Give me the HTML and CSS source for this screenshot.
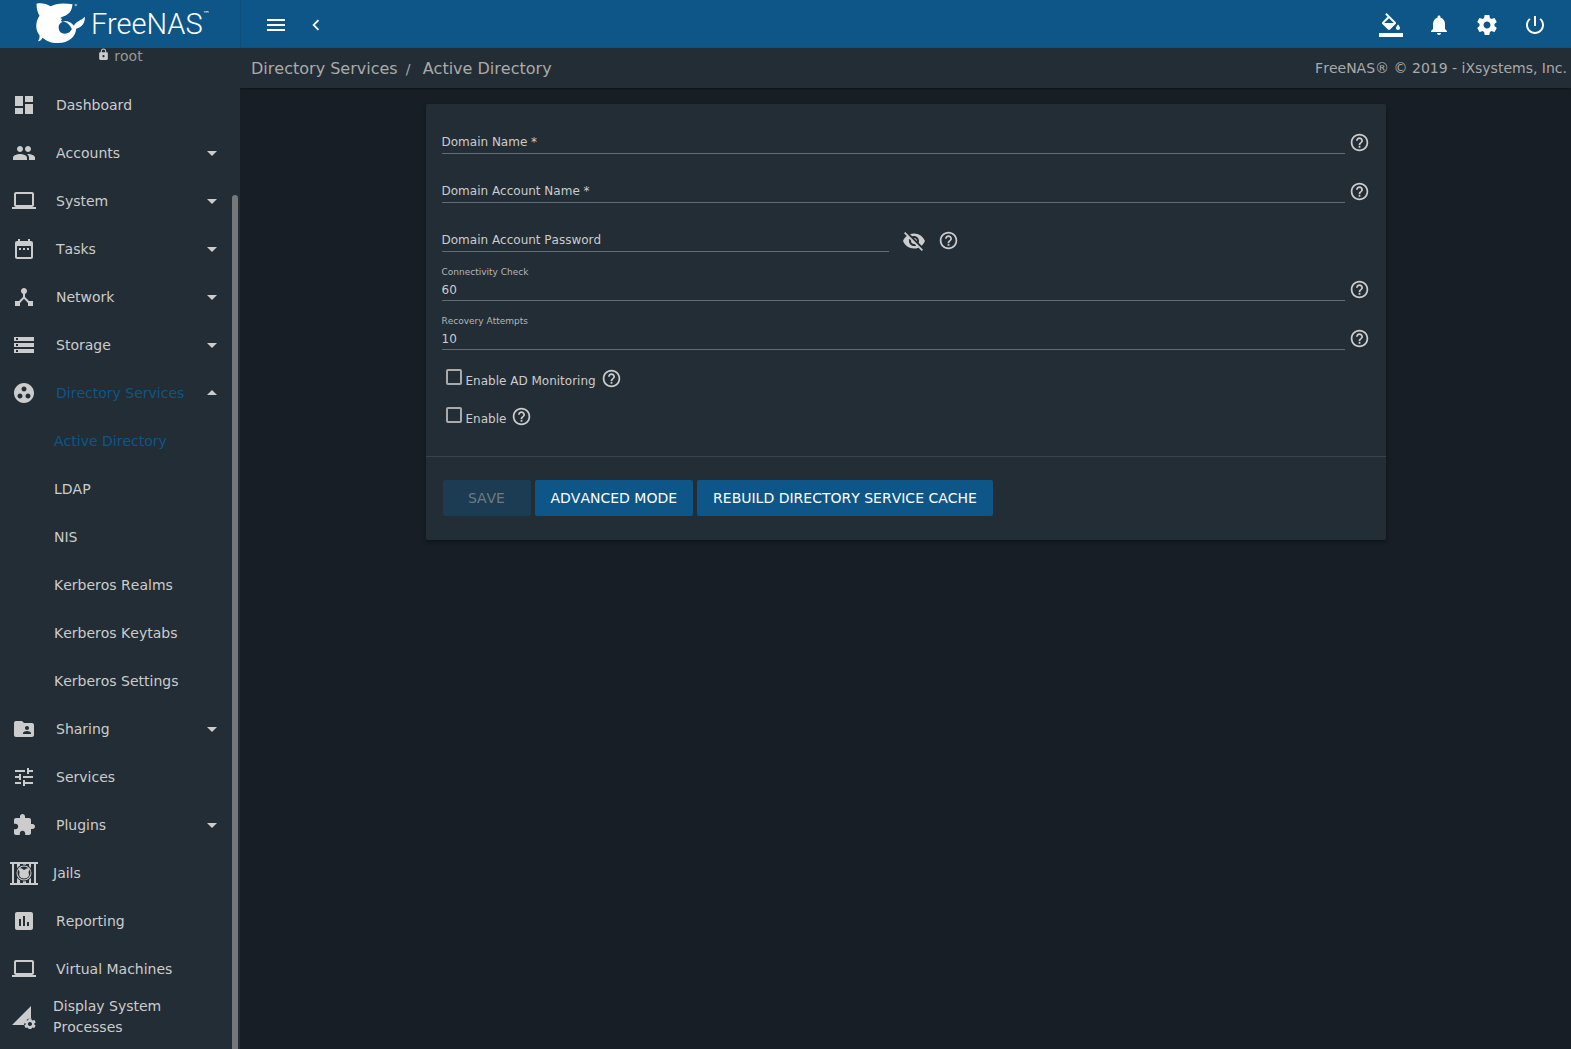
FILE: index.html
```html
<!DOCTYPE html>
<html lang="en">
<head>
<meta charset="utf-8">
<meta name="viewport" content="width=device-width, initial-scale=1">
<title>FreeNAS - Active Directory</title>
<link rel="stylesheet" href="styles.css">
</head>
<body>
<svg class="sprite" aria-hidden="true">
  <symbol id="laptop" viewBox="0 0 24 24"><path d="M20 18c1.100 0 1.990-.9 1.990-2L22 5c0-1.100-.9-2-2-2H4c-1.100 0-2 .9-2 2v11c0 1.100.9 2 2 2H0v2h24v-2h-4zM4 5h16v11H4V5z"/></symbol>
  <symbol id="down" viewBox="0 0 24 24"><path d="M7 10l5 5 5-5z"/></symbol>
  <symbol id="up" viewBox="0 0 24 24"><path d="M7 14l5-5 5 5z"/></symbol>
  <symbol id="help" viewBox="0 0 24 24"><path d="M11 18h2v-2h-2v2zm1-16C6.480 2 2 6.480 2 12s4.480 10 10 10 10-4.480 10-10S17.520 2 12 2zm0 18c-4.410 0-8-3.590-8-8s3.590-8 8-8 8 3.590 8 8-3.590 8-8 8zm0-14c-2.210 0-4 1.790-4 4h2c0-1.100.9-2 2-2s2 .9 2 2c0 2-3 1.750-3 5h2c0-2.250 3-2.500 3-5 0-2.210-1.790-4-4-4z"/></symbol>
</svg>

<header class="topbar">
  <a class="brand" href="#" aria-label="FreeNAS">
    <svg class="shark" viewBox="106 6 152 126" aria-hidden="true"><path d="M110 11C126 8 140 12 152 19C168 10 190 8 218 13C217 27 212 38 203 43C196 49 188 50 181 54L187 57L183 62L188 66C178 69 173 80 179 93C185 103 199 103 209 97L216 88C212 76 202 66 188 64C204 60 216 68 222 77C230 62 244 62 255 50C256 66 249 80 229 86C228 110 206 130 172 129C153 129 138 122 128 113C126 119 121 123 114 124C118 119 120 112 119 106C107 91 105 67 119 47C113 37 110 25 110 11Z"/><circle class="reg" cx="228" cy="15" r="4"/></svg>
    <span class="wordmark">FreeNAS</span><sup class="tm">™</sup>
  </a>
  <div class="tools">
    <button class="tool" type="button" aria-label="Toggle menu"><svg viewBox="0 0 24 24"><path d="M3 18h18v-2H3v2zm0-5h18v-2H3v2zm0-7v2h18V6H3z"/></svg></button>
    <button class="tool small" type="button" aria-label="Collapse menu"><svg viewBox="0 0 24 24"><path d="M15.410 7.410L14 6l-6 6 6 6 1.410-1.410L10.830 12z"/></svg></button>
  </div>
  <div class="actions">
    <button class="action" type="button" aria-label="Theme"><svg viewBox="0 0 24 24"><path d="M16.560 8.940L7.620 0 6.210 1.410l2.380 2.380-5.150 5.150c-.59.59-.59 1.540 0 2.120l5.500 5.500c.29.29.68.44 1.060.44s.77-.15 1.060-.44l5.500-5.500c.59-.58.59-1.530 0-2.120zM5.210 10L10 5.210 14.790 10H5.210zM19 11.500s-2 2.170-2 3.500c0 1.100.9 2 2 2s2-.9 2-2c0-1.330-2-3.500-2-3.500zM0 20h24v4H0z"/></svg></button>
    <button class="action" type="button" aria-label="Notifications"><svg viewBox="0 0 24 24"><path d="M12 22c1.100 0 2-.9 2-2h-4c0 1.100.89 2 2 2zm6-6v-5c0-3.070-1.640-5.640-4.500-6.320V4c0-.83-.67-1.500-1.500-1.500s-1.500.67-1.500 1.500v.68C7.630 5.360 6 7.920 6 11v5l-2 2v1h16v-1l-2-2z"/></svg></button>
    <button class="action" type="button" aria-label="Settings"><svg viewBox="0 0 24 24"><path id="gear" d="M19.430 12.980c.04-.32.070-.64.070-.98s-.03-.66-.07-.98l2.110-1.650c.19-.15.24-.42.120-.64l-2-3.460c-.12-.22-.39-.3-.61-.22l-2.490 1c-.52-.4-1.080-.73-1.690-.98l-.38-2.650C14.460 2.180 14.250 2 14 2h-4c-.25 0-.46.18-.49.42l-.38 2.650c-.61.25-1.170.59-1.690.98l-2.490-1c-.23-.09-.49 0-.61.22l-2 3.460c-.13.22-.07.49.120.64l2.110 1.650c-.04.320-.07.650-.07.980s.03.660.07.980l-2.110 1.650c-.19.150-.24.420-.12.640l2 3.460c.12.220.39.300.61.220l2.490-1c.52.400 1.080.730 1.690.980l.38 2.650c.03.240.24.420.49.420h4c.25 0 .46-.18.490-.42l.38-2.650c.61-.25 1.170-.59 1.690-.98l2.490 1c.23.090.49 0 .61-.22l2-3.460c.12-.22.070-.49-.12-.64l-2.110-1.650zM12 15.500c-1.930 0-3.500-1.570-3.500-3.500s1.570-3.500 3.500-3.500 3.500 1.570 3.500 3.500-1.570 3.500-3.500 3.500z"/></svg></button>
    <button class="action" type="button" aria-label="Power"><svg viewBox="0 0 24 24"><path d="M13 3h-2v10h2V3zm4.830 2.170l-1.420 1.420C17.990 7.860 19 9.810 19 12c0 3.870-3.130 7-7 7s-7-3.130-7-7c0-2.190 1.010-4.140 2.580-5.420L6.170 5.170C4.230 6.820 3 9.260 3 12c0 4.970 4.030 9 9 9s9-4.030 9-9c0-2.740-1.230-5.180-3.170-6.830z"/></svg></button>
  </div>
</header>

<div class="shell">
  <aside class="sidebar">
    <div class="user">
      <svg viewBox="0 0 24 24" aria-hidden="true"><path d="M18 8h-1V6c0-2.760-2.240-5-5-5S7 3.240 7 6v2H6c-1.100 0-2 .9-2 2v10c0 1.100.9 2 2 2h12c1.100 0 2-.9 2-2V10c0-1.100-.9-2-2-2zm-6 9c-1.100 0-2-.9-2-2s.9-2 2-2 2 .9 2 2-.9 2-2 2zm3.100-9H8.900V6c0-1.710 1.390-3.100 3.100-3.100 1.710 0 3.100 1.390 3.100 3.100v2z"/></svg>
      <span>root</span>
    </div>
    <nav class="menu">
      <a class="item" href="#"><svg viewBox="0 0 24 24"><path d="M3 13h8V3H3v10zm0 8h8v-6H3v6zm10 0h8V11h-8v10zm0-18v6h8V3h-8z"/></svg><span>Dashboard</span></a>
      <a class="item" href="#"><svg viewBox="0 0 24 24"><path d="M16 11c1.660 0 2.990-1.340 2.990-3S17.660 5 16 5c-1.660 0-3 1.340-3 3s1.340 3 3 3zm-8 0c1.660 0 2.990-1.340 2.990-3S9.660 5 8 5C6.340 5 5 6.340 5 8s1.340 3 3 3zm0 2c-2.330 0-7 1.170-7 3.500V19h14v-2.500c0-2.330-4.670-3.500-7-3.500zm8 0c-.29 0-.62.020-.97.050 1.160.84 1.970 1.970 1.970 3.450V19h6v-2.500c0-2.330-4.670-3.500-7-3.500z"/></svg><span>Accounts</span><svg class="caret"><use href="#down"/></svg></a>
      <a class="item" href="#"><svg><use href="#laptop"/></svg><span>System</span><svg class="caret"><use href="#down"/></svg></a>
      <a class="item" href="#"><svg viewBox="0 0 24 24"><path d="M9 11H7v2h2v-2zm4 0h-2v2h2v-2zm4 0h-2v2h2v-2zm2-7h-1V2h-2v2H8V2H6v2H5c-1.110 0-1.990.9-1.990 2L3 20c0 1.100.89 2 2 2h14c1.100 0 2-.9 2-2V6c0-1.100-.9-2-2-2zm0 16H5V9h14v11z"/></svg><span>Tasks</span><svg class="caret"><use href="#down"/></svg></a>
      <a class="item" href="#"><svg viewBox="0 0 24 24"><path d="M17 16l-4-4V8.820C14.160 8.400 15 7.300 15 6c0-1.660-1.340-3-3-3S9 4.340 9 6c0 1.300.84 2.400 2 2.820V12l-4 4H3v5h5v-3.050l4-4.200 4 4.200V21h5v-5h-4z"/></svg><span>Network</span><svg class="caret"><use href="#down"/></svg></a>
      <a class="item" href="#"><svg viewBox="0 0 24 24"><path d="M2 20h20v-4H2v4zm2-3h2v2H4v-2zM2 4v4h20V4H2zm4 3H4V5h2v2zm-4 7h20v-4H2v4zm2-3h2v2H4v-2z"/></svg><span>Storage</span><svg class="caret"><use href="#down"/></svg></a>
      <a class="item active" href="#"><svg viewBox="0 0 24 24"><path d="M12 2C6.480 2 2 6.480 2 12s4.480 10 10 10 10-4.480 10-10S17.520 2 12 2zM8 17.500c-1.380 0-2.500-1.120-2.500-2.500s1.120-2.500 2.500-2.500 2.500 1.120 2.500 2.500-1.120 2.500-2.500 2.500zM9.500 8c0-1.380 1.120-2.500 2.500-2.500s2.500 1.120 2.500 2.500-1.120 2.500-2.500 2.500S9.500 9.380 9.500 8zm6.500 9.500c-1.380 0-2.500-1.120-2.500-2.500s1.120-2.500 2.500-2.500 2.500 1.120 2.500 2.500-1.120 2.500-2.500 2.500z"/></svg><span>Directory Services</span><svg class="caret"><use href="#up"/></svg></a>
      <a class="item sub active" href="#"><span>Active Directory</span></a>
      <a class="item sub" href="#"><span>LDAP</span></a>
      <a class="item sub" href="#"><span>NIS</span></a>
      <a class="item sub" href="#"><span>Kerberos Realms</span></a>
      <a class="item sub" href="#"><span>Kerberos Keytabs</span></a>
      <a class="item sub" href="#"><span>Kerberos Settings</span></a>
      <a class="item" href="#"><svg viewBox="0 0 24 24"><path d="M20 6h-8l-2-2H4c-1.100 0-1.990.9-1.990 2L2 18c0 1.100.9 2 2 2h16c1.100 0 2-.9 2-2V8c0-1.100-.9-2-2-2zm-5 3c1.100 0 2 .9 2 2s-.9 2-2 2-2-.9-2-2 .9-2 2-2zm4 8h-8v-1c0-1.330 2.670-2 4-2s4 .67 4 2v1z"/></svg><span>Sharing</span><svg class="caret"><use href="#down"/></svg></a>
      <a class="item" href="#"><svg viewBox="0 0 24 24"><path d="M3 17v2h6v-2H3zM3 5v2h10V5H3zm10 16v-2h8v-2h-8v-2h-2v6h2zM7 9v2H3v2h4v2h2V9H7zm14 4v-2H11v2h10zm-6-4h2V7h4V5h-4V3h-2v6z"/></svg><span>Services</span></a>
      <a class="item" href="#"><svg viewBox="0 0 24 24"><path d="M20.500 11H19V7c0-1.100-.9-2-2-2h-4V3.500C13 2.120 11.880 1 10.500 1S8 2.120 8 3.500V5H4c-1.100 0-1.990.9-1.990 2v3.800H3.500c1.490 0 2.700 1.210 2.700 2.700s-1.210 2.700-2.700 2.700H2V20c0 1.100.9 2 2 2h3.800v-1.500c0-1.490 1.210-2.700 2.700-2.700 1.490 0 2.700 1.210 2.700 2.700V22H17c1.100 0 2-.9 2-2v-4h1.500c1.380 0 2.500-1.120 2.500-2.500S21.880 11 20.500 11z"/></svg><span>Plugins</span><svg class="caret"><use href="#down"/></svg></a>
      <a class="item custom" href="#"><svg viewBox="0 0 28 24"><path d="M0 1h28v2H0zM0 22h28v2H0zM2 3h2v19H2zM7 3h3v19H7zM13 3h3v19h-3zM19 3h2v19h-2zM24 3h2v19h-2z"/><circle class="hole" cx="14" cy="12" r="8.500"/><circle cx="14" cy="12" r="7.500"/><circle class="hole" cx="14" cy="12" r="6.500"/><path d="M9 7q3 0 5 2q3-2 5-2q1 2-.5 4q2 6-4.500 6.500q-6-.5-4.500-6.500Q8.500 9 9 7z"/></svg><span>Jails</span></a>
      <a class="item" href="#"><svg viewBox="0 0 24 24"><path d="M19 3H5c-1.100 0-2 .9-2 2v14c0 1.100.9 2 2 2h14c1.100 0 2-.9 2-2V5c0-1.100-.9-2-2-2zM9 17H7v-7h2v7zm4 0h-2V7h2v10zm4 0h-2v-4h2v4z"/></svg><span>Reporting</span></a>
      <a class="item" href="#"><svg><use href="#laptop"/></svg><span>Virtual Machines</span></a>
      <a class="item custom" href="#"><svg viewBox="0 0 28 24"><path d="M2 20L21 1V13Q15 14 14 20Z"/><g transform="translate(13 12) scale(.58)"><use href="#gear"/></g></svg><span class="wrap">Display System Processes</span></a>
    </nav>
    <div class="scroll-thumb"></div>
  </aside>

  <main class="content">
    <div class="crumbs">
      <nav class="trail" aria-label="Breadcrumb"><a href="#">Directory Services</a><span class="slash">/</span><a href="#">Active Directory</a></nav>
      <span class="copyright">FreeNAS® © 2019 - iXsystems, Inc.</span>
    </div>
    <form class="card">
      <div class="fields">
        <div class="row">
          <div class="field"><label for="domain">Domain Name *</label><input id="domain" type="text"></div>
          <button class="icon-btn" type="button" aria-label="Help"><svg><use href="#help"/></svg></button>
        </div>
        <div class="row">
          <div class="field"><label for="account">Domain Account Name *</label><input id="account" type="text"></div>
          <button class="icon-btn" type="button" aria-label="Help"><svg><use href="#help"/></svg></button>
        </div>
        <div class="row half">
          <div class="field"><label for="password">Domain Account Password</label><input id="password" type="password"></div>
          <button class="icon-btn eye" type="button" aria-label="Show password"><svg viewBox="0 0 24 24"><path d="M12 7c2.760 0 5 2.240 5 5 0 .65-.13 1.260-.36 1.830l2.920 2.920c1.510-1.260 2.700-2.890 3.430-4.750-1.730-4.390-6-7.500-11-7.500-1.400 0-2.740.25-3.980.7l2.160 2.160C10.740 7.130 11.350 7 12 7zM2 4.270l2.280 2.280.46.46C3.080 8.300 1.780 10.020 1 12c1.730 4.390 6 7.500 11 7.500 1.550 0 3.030-.3 4.380-.84l.42.42L19.730 22 21 20.730 3.270 3 2 4.270zM7.530 9.800l1.550 1.550c-.05.21-.08.43-.08.650 0 1.660 1.340 3 3 3 .22 0 .44-.03.65-.08l1.550 1.550c-.67.33-1.410.53-2.200.53-2.760 0-5-2.240-5-5 0-.79.2-1.530.53-2.200zm4.310-.78l3.150 3.150.02-.16c0-1.660-1.340-3-3-3l-.17.010z"/></svg></button>
          <button class="icon-btn" type="button" aria-label="Help"><svg><use href="#help"/></svg></button>
        </div>
        <div class="row">
          <div class="field filled"><label for="check">Connectivity Check</label><input id="check" type="text" value="60"></div>
          <button class="icon-btn" type="button" aria-label="Help"><svg><use href="#help"/></svg></button>
        </div>
        <div class="row">
          <div class="field filled"><label for="attempts">Recovery Attempts</label><input id="attempts" type="text" value="10"></div>
          <button class="icon-btn" type="button" aria-label="Help"><svg><use href="#help"/></svg></button>
        </div>
        <div class="tick">
          <input id="monitor" type="checkbox"><label for="monitor">Enable AD Monitoring</label>
          <button class="icon-btn" type="button" aria-label="Help"><svg><use href="#help"/></svg></button>
        </div>
        <div class="tick">
          <input id="enable" type="checkbox"><label for="enable">Enable</label>
          <button class="icon-btn" type="button" aria-label="Help"><svg><use href="#help"/></svg></button>
        </div>
      </div>
      <div class="buttons">
        <button class="btn" type="submit" disabled>SAVE</button>
        <button class="btn" type="button">ADVANCED MODE</button>
        <button class="btn" type="button">REBUILD DIRECTORY SERVICE CACHE</button>
      </div>
    </form>
  </main>
</div>
</body>
</html>
```
FILE: styles.css
```css
:root {
  --bg: #171e26;
  --panel: #232d35;
  --primary: #0d5687;
  --fg: #cccccc;
  --fg-dim: #aaaaaa;
}

* { box-sizing: border-box; }

body {
  margin: 0;
  height: 100vh;
  display: flex;
  flex-direction: column;
  overflow: hidden;
  background: var(--bg);
  color: var(--fg);
  font-family: "DejaVu Sans", sans-serif;
  font-size: 14px;
  font-kerning: none;
}

a { color: inherit; text-decoration: none; }
svg { display: block; fill: currentColor; }
.sprite { display: none; }
button { font: inherit; font-kerning: none; color: inherit; background: none; border: 0; padding: 0; cursor: pointer; }

/* top bar */
.topbar {
  flex: none;
  display: flex;
  height: 48px;
  background: var(--primary);
  color: #fff;
}
.brand {
  width: 241px;
  padding-left: 35px;
  display: flex;
  align-items: center;
  border-right: 1px solid #0b4e7b;
}
.shark { width: 51px; height: 42px; margin: 0 5px 2px 0; }
.reg { opacity: .5; }
.wordmark { font: 300 29px/46px Roboto, sans-serif; }
.tm { align-self: flex-start; font-size: 7px; line-height: 28px; }
.tools { flex: 1; display: flex; align-items: center; padding: 2px 0 0 15px; }
.tool { width: 40px; height: 40px; display: grid; place-items: center; }
.tool svg, .action svg { width: 24px; height: 24px; }
.tool.small svg { width: 22px; height: 22px; }
.actions { display: flex; align-items: center; padding: 2px 12px 0 0; }
.action { width: 48px; height: 46px; display: grid; place-items: center; }

/* sidebar */
.shell { flex: 1; min-height: 0; display: flex; }
.sidebar {
  position: relative;
  flex: none;
  width: 240px;
  overflow: hidden;
  background: var(--panel);
}
.user {
  display: flex;
  justify-content: center;
  gap: 4px;
  height: 33px;
  color: #999999;
  line-height: 16px;
}
.user svg { width: 13px; height: 13px; color: var(--fg); }
.item {
  display: flex;
  align-items: center;
  gap: 20px;
  height: 48px;
  padding: 0 16px 0 12px;
  line-height: 21px;
  white-space: nowrap;
}
.item svg { flex: none; width: 24px; height: 24px; color: var(--fg); }
.item .caret { margin-left: auto; }
.item span + .caret { margin-left: auto; }
.item:has(.caret) { gap: 0; }
.item:has(.caret) span { padding-left: 20px; }
.item.sub { padding-left: 54px; }
.item.active { color: var(--primary); }
.item.custom { padding-left: 10px; gap: 15px; }
.item.custom svg { width: 28px; }
.item .wrap { max-width: 140px; white-space: normal; }
.hole { fill: var(--panel); }
.scroll-thumb {
  position: absolute;
  right: 2px;
  top: 147px;
  bottom: 0;
  width: 6px;
  border-radius: 3px 3px 0 0;
  background: #75787a;
}

/* content */
.content { flex: 1; min-width: 0; }
.crumbs {
  display: flex;
  justify-content: space-between;
  align-items: center;
  height: 40px;
  padding: 0 4px 0 11px;
  background: var(--panel);
  color: var(--fg-dim);
  box-shadow: 0 1px 2px rgba(0, 0, 0, .4);
}
.trail { display: flex; padding-top: 2px; font-size: 16px; }
.slash { width: 25px; padding-left: 8px; font-size: 14px; line-height: 20px; }

.card {
  max-width: 960px;
  margin: 16px auto;
  background: var(--panel);
  border-radius: 2px;
  box-shadow: 0 2px 4px rgba(0, 0, 0, .35);
  font-size: 12px;
}
.fields { padding: 1px 16px 26px; }
.row { display: flex; align-items: flex-end; height: 49px; }
.field {
  flex: 1;
  display: grid;
  height: 38px;
  border-bottom: 1px solid #646b71;
}
.field label, .field input { grid-area: 1 / 1; }
.field label { align-self: end; line-height: 22px; pointer-events: none; }
.field.filled label { align-self: start; font-size: 9px; line-height: 18px; color: #b4b6b8; }
.field input {
  align-self: end;
  height: 20px;
  width: 100%;
  padding: 0;
  border: 0;
  outline: 0;
  background: none;
  color: inherit;
  font: inherit;
}
.icon-btn { flex: none; width: 21px; height: 21px; }
.icon-btn svg { width: 21px; height: 21px; }
.row .icon-btn { margin: 0 0 1px 4px; }
.half .field { flex: none; width: 447px; }
.half .icon-btn { margin: 0 0 1px 12px; }
.half .eye, .eye svg { width: 24px; height: 24px; }
.half .eye { margin: 0 0 -1px 13px; }

.tick { display: flex; align-items: center; height: 38px; padding: 10px 0 0 4px; }
.row + .tick { margin-top: 4px; }
.tick input {
  appearance: none;
  width: 16px;
  height: 16px;
  margin: 0 4px 2px 0;
  border: 2px solid var(--fg-dim);
  border-radius: 2px;
}
.tick label { line-height: 14px; padding-top: 6px; }
.tick .icon-btn { margin-left: 5px; }

.buttons {
  display: flex;
  gap: 4px;
  padding: 23px 17px 24px;
  border-top: 1px solid #39434b;
}
.btn {
  min-width: 88px;
  height: 36px;
  padding: 0 16px;
  border-radius: 2px;
  background: var(--primary);
  color: #fff;
  font-size: 14px;
}
.btn:disabled { background: #1b3c52; color: #6f7a81; cursor: default; }
```
